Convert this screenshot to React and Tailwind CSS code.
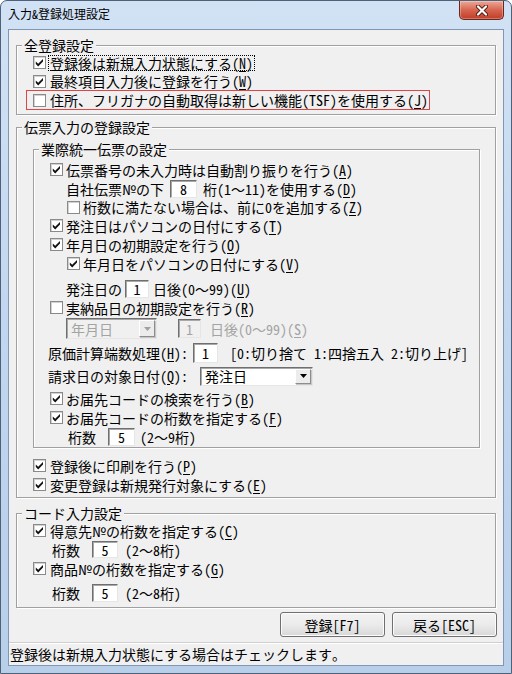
import React from 'react';

const FONT = "font-[Noto_Sans_Mono_CJK_JP,Noto_Sans_CJK_JP,sans-serif]";

function Check({ on }) {
  return (
    <span className="w-[13px] h-[13px] shrink-0 border border-[#8a8a8a] bg-white shadow-[inset_1px_1px_0_#d2d2d2] flex items-center justify-center">
      {on && (
        <svg width="9" height="9" viewBox="0 0 9 9">
          <polygon points="0.8,3.4 3.2,5.8 8,1 8,3.6 3.2,8.4 0.8,6" fill="#111" />
        </svg>
      )}
    </span>
  );
}

function U({ c }) {
  return (
    <>
      (<span className="underline underline-offset-[2px]">{c}</span>)
    </>
  );
}

function Label({ children }) {
  return (
    <div className="-mt-[9px] ml-[5px] px-[2px] w-fit h-[16px] leading-[16px] bg-[#f0f0f0] whitespace-nowrap">{children}</div>
  );
}

function Edit({ cls, v, disabled }) {
  return (
    <div
      className={
        cls +
        " shrink-0 border border-t-[#6f6f6f] border-l-[#6f6f6f] border-r-[#e6e6e6] border-b-[#e6e6e6] shadow-[inset_1px_1px_0_#a8a8a8] flex items-center justify-center " +
        (disabled ? "bg-[#f0f0f0] text-[#a3a3a3]" : "bg-white text-black")
      }
    >
      {v}
    </div>
  );
}

function Arrow({ disabled }) {
  return (
    <div className="w-[16px] h-full shrink-0 border border-t-white border-l-white border-r-[#8c8c8c] border-b-[#8c8c8c] bg-[#ececec] shadow-[1px_1px_0_#c8c8c8] flex items-center justify-center">
      <svg width="7" height="4" viewBox="0 0 7 4">
        <polygon points="0,0 7,0 3.5,4" fill={disabled ? "#a0a0a0" : "#000"} />
      </svg>
    </div>
  );
}

function Combo({ cls, text, disabled }) {
  return (
    <div
      className={
        cls +
        " shrink-0 border border-t-[#6f6f6f] border-l-[#6f6f6f] border-r-[#e6e6e6] border-b-[#e6e6e6] shadow-[inset_1px_1px_0_#a8a8a8] flex items-stretch p-[1px] " +
        (disabled ? "bg-[#f0f0f0] text-[#a3a3a3]" : "bg-white text-black")
      }
    >
      <div className="flex-1 flex items-center pl-[3px]">{text}</div>
      <Arrow disabled={disabled} />
    </div>
  );
}

const GROUP =
  "border border-[#a0a0a0] shadow-[1px_1px_0_#ffffff,inset_1px_1px_0_#ffffff]";

export default function App() {
  return (
    <div className="w-[512px] h-[674px] bg-white">
      <div className="w-[512px] h-[674px] flex flex-col rounded-t-[7px] border border-[#4f6178] bg-gradient-to-b from-[#d2e2f5] via-[#c1d6ef] to-[#b8cfea] overflow-hidden">
        {/* title bar */}
        <div className="h-[28px] shrink-0 flex items-start justify-between">
          <div className={"pl-[7px] pt-[5px] text-[12px] leading-[16px] text-black " + FONT}>
            入力&amp;登録処理設定
          </div>
          <div className="mr-[7px] w-[45px] h-[19px] rounded-b-[5px] border border-t-0 border-[#6b261c] bg-gradient-to-b from-[#eaa898] via-[#d6654f] to-[#c03b28] shadow-[inset_0_0_0_1px_rgba(255,255,255,0.3)] flex items-center justify-center">
            <svg width="14" height="11" viewBox="0 0 14 11">
              <path d="M3 1.5 L11 9.5 M11 1.5 L3 9.5" stroke="#5a1a10" strokeWidth="4" strokeLinecap="round" />
              <path d="M3 1.5 L11 9.5 M11 1.5 L3 9.5" stroke="#ffffff" strokeWidth="2.2" strokeLinecap="round" />
            </svg>
          </div>
        </div>

        {/* client */}
        <div className={"mx-[7px] h-[637px] shrink-0 border border-[#8196b3] bg-[#f0f0f0] flex flex-col text-[14px] leading-[16px] text-black whitespace-nowrap " + FONT}>
          {/* group 1 */}
          <div className={"mt-[15px] mx-[7px] pb-[4px] " + GROUP}>
            <Label>全登録設定</Label>
            <div className="h-[19px] flex items-center pl-[16px] gap-[2px]">
              <Check on />
              <span className="border border-dotted border-black px-[1px] leading-[14px]">
                登録後は新規入力状態にする<U c="N" />
              </span>
            </div>
            <div className="h-[18px] flex items-center pl-[16px] gap-[4px]">
              <Check on />
              <span>最終項目入力後に登録を行う<U c="W" /></span>
            </div>
            <div className="ml-[9px] w-[404px] h-[20px] border border-[#e04545] flex items-center pl-[6px] gap-[4px]">
              <Check />
              <span>住所、フリガナの自動取得は新しい機能(TSF)を使用する<U c="J" /></span>
            </div>
          </div>

          {/* group 2 */}
          <div className={"mt-[12px] mx-[7px] pb-[3px] " + GROUP}>
            <Label>伝票入力の登録設定</Label>
            <div className={"mt-[14px] ml-[16px] mr-[15px] pb-[1px] " + GROUP}>
              <Label>業際統一伝票の設定</Label>
              <div className="mt-[3px] h-[19px] flex items-center pl-[16px] gap-[3px]">
                <Check on />
                <span>伝票番号の未入力時は自動割り振りを行う<U c="A" /></span>
              </div>
              <div className="h-[19px] flex items-center pl-[32px]">
                <span className="w-[104px] shrink-0">自社伝票№の下</span>
                <Edit cls="w-[27px] h-[18px]" v="8" />
                <span className="ml-[6px]">桁(1～11)を使用する<U c="D" /></span>
              </div>
              <div className="h-[18px] flex items-center pl-[33px] gap-[3px]">
                <Check />
                <span>桁数に満たない場合は、前に0を追加する<U c="Z" /></span>
              </div>
              <div className="h-[19px] flex items-center pl-[16px] gap-[3px]">
                <Check on />
                <span>発注日はパソコンの日付にする<U c="T" /></span>
              </div>
              <div className="h-[19px] flex items-center pl-[16px] gap-[3px]">
                <Check on />
                <span>年月日の初期設定を行う<U c="O" /></span>
              </div>
              <div className="h-[19px] flex items-center pl-[33px] gap-[3px]">
                <Check on />
                <span>年月日をパソコンの日付にする<U c="V" /></span>
              </div>
              <div className="mt-[6px] h-[19px] flex items-center pl-[32px]">
                <span className="w-[59px] shrink-0">発注日の</span>
                <Edit cls="w-[24px] h-[18px]" v="1" />
                <span className="ml-[4px]">日後(0～99)<U c="U" /></span>
              </div>
              <div className="h-[19px] flex items-center pl-[16px] gap-[3px]">
                <Check />
                <span>実納品日の初期設定を行う<U c="R" /></span>
              </div>
              <div className="mt-[1px] h-[21px] flex items-center pl-[32px]">
                <Combo cls="w-[91px] h-[21px]" text="年月日" disabled />
                <Edit cls="ml-[21px] w-[23px] h-[19px]" v="1" disabled />
                <span className="ml-[9px] text-[#a3a3a3]">日後(0～99)<U c="S" /></span>
              </div>
              <div className="mt-[4px] h-[20px] flex items-center pl-[14px]">
                <span className="w-[145px] shrink-0">原価計算端数処理<U c="H" />:</span>
                <Edit cls="w-[25px] h-[20px]" v="1" />
                <span className="ml-[12px]">[0:切り捨て 1:四捨五入 2:切り上げ]</span>
              </div>
              <div className="mt-[3px] h-[20px] flex items-center pl-[14px]">
                <span className="w-[152px] shrink-0">請求日の対象日付<U c="Q" />:</span>
                <Combo cls="w-[113px] h-[19px]" text="発注日" />
              </div>
              <div className="mt-[3px] h-[19px] flex items-center pl-[16px] gap-[3px]">
                <Check on />
                <span>お届先コードの検索を行う<U c="B" /></span>
              </div>
              <div className="h-[19px] flex items-center pl-[16px] gap-[3px]">
                <Check on />
                <span>お届先コードの桁数を指定する<U c="F" /></span>
              </div>
              <div className="h-[19px] flex items-center pl-[34px]">
                <span className="w-[40px] shrink-0">桁数</span>
                <Edit cls="w-[27px] h-[18px]" v="5" />
                <span className="ml-[5px]">(2～9桁)</span>
              </div>
            </div>
            <div className="mt-[8px] h-[19px] flex items-center pl-[16px] gap-[4px]">
              <Check on />
              <span>登録後に印刷を行う<U c="P" /></span>
            </div>
            <div className="h-[19px] flex items-center pl-[16px] gap-[4px]">
              <Check on />
              <span>変更登録は新規発行対象にする<U c="E" /></span>
            </div>
          </div>

          {/* group 3 */}
          <div className={"mt-[15px] mx-[7px] pb-[5px] " + GROUP}>
            <Label>コード入力設定</Label>
            <div className="h-[19px] flex items-center pl-[16px] gap-[4px]">
              <Check on />
              <span>得意先№の桁数を指定する<U c="C" /></span>
            </div>
            <div className="mt-[1px] h-[17px] flex items-center pl-[35px]">
              <span className="w-[40px] shrink-0">桁数</span>
              <Edit cls="w-[26px] h-[17px]" v="5" />
              <span className="ml-[7px]">(2～8桁)</span>
            </div>
            <div className="mt-[1px] h-[19px] flex items-center pl-[16px] gap-[4px]">
              <Check on />
              <span>商品№の桁数を指定する<U c="G" /></span>
            </div>
            <div className="mt-[6px] h-[18px] flex items-center pl-[35px]">
              <span className="w-[40px] shrink-0">桁数</span>
              <Edit cls="w-[26px] h-[18px]" v="5" />
              <span className="ml-[7px]">(2～8桁)</span>
            </div>
          </div>

          {/* buttons */}
          <div className="mt-[4px] h-[25px] flex justify-end gap-[7px] pr-[6px]">
            <div className="w-[105px] h-[25px] rounded-[3px] border border-[#707070] bg-gradient-to-b from-[#f3f3f3] via-[#ebebeb] to-[#d8d8d8] shadow-[inset_0_0_0_1px_#fcfcfc] flex items-center justify-center">
              登録[F7]
            </div>
            <div className="w-[105px] h-[25px] rounded-[3px] border border-[#707070] bg-gradient-to-b from-[#f3f3f3] via-[#ebebeb] to-[#d8d8d8] shadow-[inset_0_0_0_1px_#fcfcfc] flex items-center justify-center">
              戻る[ESC]
            </div>
          </div>

          {/* status bar */}
          <div className="mt-[5px] flex-1 border-t border-[#cfcfcf] shadow-[inset_0_1px_0_#ffffff] flex items-center pl-[1px]">
            登録後は新規入力状態にする場合はチェックします。
          </div>
        </div>
      </div>
    </div>
  );
}
